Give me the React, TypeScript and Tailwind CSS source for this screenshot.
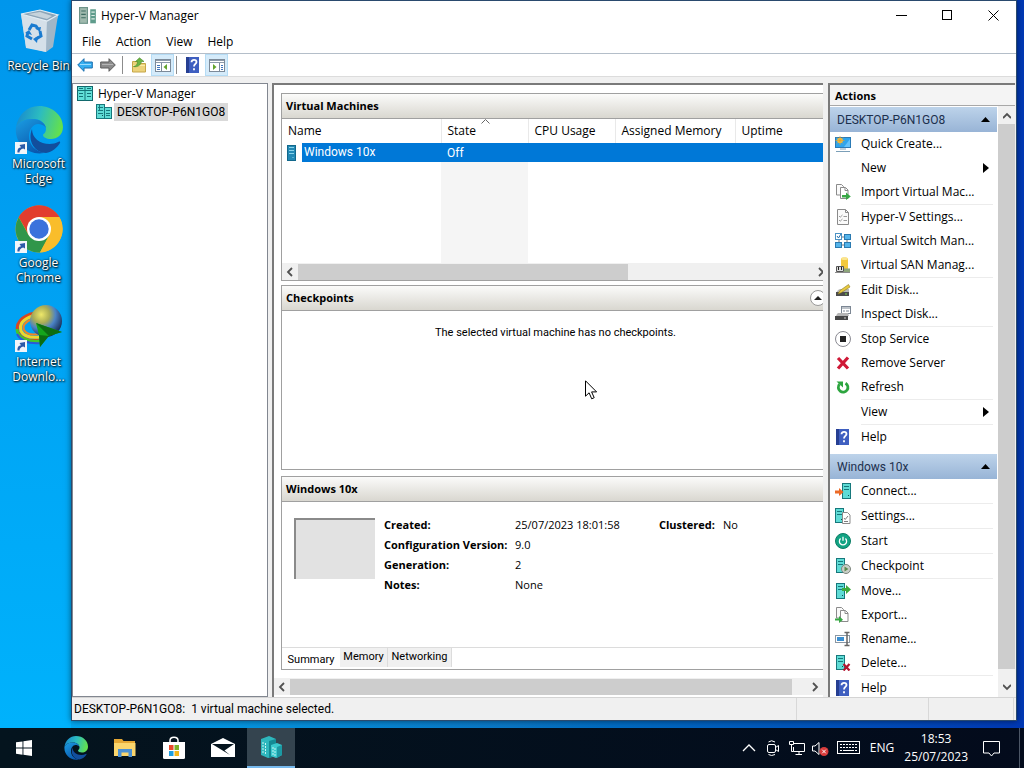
import type { ReactNode } from 'react'

/* ---------- icons ---------- */

const Svg = ({ children, size = 16, box = 16 }: { children: ReactNode; size?: number; box?: number }) => (
  <svg width={size} height={size} viewBox={`0 0 ${box} ${box}`} fill="none" className="shrink-0" aria-hidden="true">
    {children}
  </svg>
)

const Tower = ({ x = 0, y = 0, w = 8, h = 14 }: { x?: number; y?: number; w?: number; h?: number }) => (
  <g>
    <rect x={x + 0.5} y={y + 0.5} width={w - 1} height={h - 1} fill="#5fdcd6" stroke="#17787c" />
    <path d={`M${x + 2} ${y + 3.5}h${w - 4}M${x + 2} ${y + 6.5}h${w - 4}`} stroke="#17787c" />
    <path d={`M${x + w - 3} ${y + h - 3.5}h1`} stroke="#0b4f52" />
  </g>
)

const AppIcon = () => (
  <Svg size={18}>
    <rect x="0.500" y="0.500" width="7" height="14" fill="#9fb9ad" stroke="#6d9388" />
    <path d="M2 3.500h4M2 6.500h4M2 9.500h4" stroke="#3f6c62" />
    <rect x="10" y="2" width="5" height="12.500" fill="#5f9c8c" />
    <path d="M11 4.500h3M11 7.500h3M11 10.500h3" stroke="#dcebe4" />
  </Svg>
)

const TreeRootIcon = () => (
  <Svg>
    <rect x="0.5" y="0.5" width="15" height="14" fill="#62e0d8" stroke="#12686c" />
    <path d="M8 0v15M0 4.500h16M2 2.500h4M10 2.500h4M2 7.500h4M10 7.500h4M2 10.500h4M10 10.500h4" stroke="#147377" />
  </Svg>
)

const HostIcon = () => (
  <Svg>
    <Tower x={0} y={0} w={9} h={15} />
    <Tower x={8} y={3} w={8} h={12} />
    <path d="M2 9.500h5M10 11.500h4M3.500 1v5" stroke="#17787c" />
  </Svg>
)

const VmIcon = () => (
  <svg width="10" height="16" viewBox="0 0 10 16" fill="none" aria-hidden="true">
    <rect x="0.5" y="0.5" width="8" height="15" fill="#2389b5" stroke="#12688c" />
    <path d="M2 2.500h5M2 5.500h5M2 8.500h5" stroke="#8ad4ea" />
    <path d="M5.500 12.500h1" stroke="#8ad4ea" />
  </svg>
)

const HelpIcon = () => (
  <Svg>
    <rect x="1" y="0" width="13" height="16" fill="#3f5fc0" />
    <rect x="1" y="0" width="3" height="16" fill="#263f92" />
    <path d="M6.500 5.200c0-3.300 5-3 5-.3 0 2-2.500 2-2.500 4.600M9 11.300v2" stroke="#fff" strokeWidth="1.800" />
  </Svg>
)

const Arrow = ({ left = false }: { left?: boolean }) =>
  left ? (
    <Svg>
      <path d="M.7 8 7 1.700V5h8.300v6H7v3.300z" fill="#35aef0" stroke="#1c6fae" />
      <path d="M3 7.500h11" stroke="#9bdcff" />
    </Svg>
  ) : (
    <Svg>
      <path d="M15.300 8 9 1.700V5H.7v6H9v3.300z" fill="#8b8b8b" stroke="#5a5a5a" />
      <path d="M2 7.500h11" stroke="#b5b5b5" />
    </Svg>
  )

const FolderUpIcon = () => (
  <Svg>
    <path d="M1.500 4.500h5l1.500 2h6.500v8.500h-13z" fill="#ecd27a" stroke="#c6a648" />
    <path d="M2 8.500h12" stroke="#f9eba6" />
    <path d="M2.500 9.500c3-.5 4-2.500 4-5H4.500L8.500.8l4.500 3.700h-2.500C10 8 6.500 10.500 2.500 9.500z" fill="#6cb443" stroke="#4a8a2c" strokeWidth=".6" />
  </Svg>
)

const PaneIcon = ({ right = false }: { right?: boolean }) => (
  <Svg>
    <rect x="0.5" y="2.500" width="15" height="12" fill="#fff" stroke="#7c8a99" />
    <path d="M1 3.500h14M1 5.500h14" stroke="#8d9aaa" />
    {right ? (
      <>
        <path d="M10.500 6v8" stroke="#7c8a99" />
        <path d="M12 8.500h2M12 10.500h2M12 12.500h2" stroke="#3f74bd" />
        <path d="m4 7 3.500 3L4 13z" fill="#63a32c" />
      </>
    ) : (
      <>
        <path d="M6.500 6v8" stroke="#7c8a99" />
        <path d="M2 8.500h3M2 10.500h3M2 12.500h3" stroke="#3f74bd" />
        <path d="M12 7v6l-3.500-3z" fill="#63a32c" />
      </>
    )}
  </Svg>
)

const QuickCreateIcon = () => (
  <Svg>
    <rect x="0.500" y="1.500" width="15" height="10" fill="#2ea4ec" stroke="#2b7ab5" />
    <path d="M9 11 15 3v8z" fill="#63c2fa" />
    <circle cx="5" cy="4.500" r="2.800" fill="#f2c14b" />
    <path d="M5 0v9M.5 4.500h9M2 1.500l6 6M8 1.500l-6 6" stroke="#e2a52b" strokeWidth=".7" />
    <path d="M5 13h6M1 15.500h14" stroke="#7b9fb8" />
  </Svg>
)

const Pages = () => (
  <>
    <path d="M1.500.5h5l2 2V11h-7z" fill="#fafafa" stroke="#8b8b8b" />
    <path d="M5.500 3.500h5l2.500 2.500v8.500H5.500z" fill="#fff" stroke="#8b8b8b" />
    <path d="M10 3.500V6.500h3" stroke="#8b8b8b" />
  </>
)

const ImportIcon = () => (
  <Svg>
    <Pages />
    <path d="M7 11h4V8.500l4.800 4-4.800 3.500v-2.500H7z" fill="#38a845" />
  </Svg>
)

const ExportIcon = () => (
  <Svg>
    <Pages />
    <path d="M0 11.500h4V9l4 3.700L4 16v-2.500H0z" fill="#38a845" />
  </Svg>
)

const HostSettingsIcon = () => (
  <Svg>
    <path d="M2.500.5h8l3 3v12h-11z" fill="#fafafa" stroke="#8a8a8a" />
    <path d="M10.500.5v3h3" stroke="#8a8a8a" />
    <path d="m4 7 1.200 1.200L7.500 6M4 11l1.200 1.200L7.500 10M8.500 7.500H12M8.500 11.500H12" stroke="#999" />
  </Svg>
)

const SwitchIcon = () => (
  <Svg>
    <path d="M7 4h3M7 12h3M4 7v3M12 7v3" stroke="#777" />
    <rect x="0.500" y="0.500" width="6" height="6" fill="#fff" stroke="#4c93c4" />
    <path d="m2 3 1.500 2L6 1" stroke="#1f6fad" />
    <rect x="9.500" y="1.500" width="6" height="5" fill="#55b4ea" stroke="#2b7ab0" />
    <rect x="0.500" y="9.500" width="6" height="5" fill="#55b4ea" stroke="#2b7ab0" />
    <rect x="9.500" y="9.500" width="6" height="5" fill="#55b4ea" stroke="#2b7ab0" />
  </Svg>
)

const SanIcon = () => (
  <Svg>
    <path d="M6 1.500C6 0 13 0 13 1.500V12H6z" fill="#f3c93c" />
    <ellipse cx="9.500" cy="1.800" rx="3.500" ry="1.200" fill="#fbe58e" />
    <path d="M1.500 14.500V9.500h7v5z" fill="#ddd" stroke="#555" />
    <path d="M3.500 10v3M6.500 10v3" stroke="#222" />
    <path d="M9 11.500h6v4H9z" fill="#8da57b" />
    <path d="M0 15.500h15" stroke="#8c8c8c" />
  </Svg>
)

const EditDiskIcon = () => (
  <Svg>
    <path d="m3 8 2-1h9v4H1z" fill="#b9b9b9" />
    <path d="M1 10h13v4H1z" fill="#4c4c4c" />
    <path d="M10 12h2" stroke="#7fdd4b" />
    <path d="m3 12 2-3.500 8.500-6L15 5l-8.500 5.500z" fill="#e8c93f" stroke="#8c7a22" strokeWidth=".6" />
  </Svg>
)

const InspectDiskIcon = () => (
  <Svg>
    <rect x="6.500" y="0.500" width="9" height="7" fill="#fff" stroke="#7c8794" />
    <path d="M6 2h10M8 5h2M11 5h3" stroke="#7c8794" />
    <path d="m2 8 1-1h10l1 3H1z" fill="#b5b5b5" />
    <path d="M0 10h13v4H0z" fill="#474747" />
    <path d="M9 12h2" stroke="#ccc" />
  </Svg>
)

const StopIcon = () => (
  <Svg>
    <circle cx="8" cy="8" r="7.500" fill="#fff" stroke="#8b8b93" />
    <rect x="5" y="5" width="6" height="6" fill="#222" />
  </Svg>
)

const RemoveIcon = () => (
  <Svg>
    <path d="m3 3 10 10.500M13 2.500l-10 11" stroke="#cf1937" strokeWidth="3.200" />
  </Svg>
)

const RefreshIcon = () => (
  <Svg>
    <path d="M10.500 4.200a4.800 4.800 0 1 1-6 1" stroke="#2da53f" strokeWidth="2.800" />
    <path d="M1.500 2.500H8v6z" fill="#2da53f" />
  </Svg>
)

const ConnectIcon = () => (
  <Svg>
    <Tower x={7} y={0} w={9} h={16} />
    <path d="M0 7.500h4V5l4.500 4L4 13v-2.500H0z" fill="#ec6a26" />
  </Svg>
)

const SettingsIcon = () => (
  <Svg>
    <Tower x={0} y={0} w={9} h={15} />
    <path d="M7.500 4.500h5l2.500 2.500v8.500H7.500z" fill="#fff" stroke="#8a8a8a" />
    <path d="m9 10 1.200 1.500L13 8M9 13.500h4" stroke="#7d7d7d" />
  </Svg>
)

const StartVmIcon = () => (
  <Svg>
    <circle cx="8" cy="8" r="7.500" fill="#12a383" stroke="#0b7d65" />
    <path d="M5.600 5.600a3.600 3.600 0 1 0 4.800 0M8 3.800v4" stroke="#fff" strokeWidth="1.300" />
  </Svg>
)

const CheckpointIcon = () => (
  <Svg>
    <Tower x={1} y={0} w={9} h={15} />
    <circle cx="11" cy="11" r="4.500" fill="#c9cfc8" stroke="#7e867d" />
    <path d="M9.500 8.500v5l4-2.500z" fill="#5d8a4f" />
  </Svg>
)

const MoveIcon = () => (
  <Svg>
    <Tower x={1} y={0} w={9} h={16} />
    <path d="M7 5h4V2l5 4.500-5 4.500V8H7z" fill="#3daa3d" />
  </Svg>
)

const RenameIcon = () => (
  <Svg>
    <rect x="0.500" y="4.500" width="14" height="7" fill="#fff" stroke="#8b97a3" />
    <rect x="2" y="6" width="7" height="4" fill="#3a8fd2" />
    <path d="M9.500 1.500h5M9.500 14.500h5M12 1.500v13" stroke="#666" strokeWidth="1.500" />
  </Svg>
)

const DeleteIcon = () => (
  <Svg>
    <Tower x={1} y={0} w={9} h={15} />
    <path d="m8.500 9 6 6.500M14.500 9l-6 6.500" stroke="#b3142f" strokeWidth="2.200" />
  </Svg>
)

const EdgeLogo = ({ size, id }: { size: number; id: string }) => (
  <Svg size={size} box={48}>
    <defs>
      <linearGradient id={`${id}a`} x1="0" y1="0.200" x2="1" y2="0.400">
        <stop offset="0" stopColor="#1787cf" />
        <stop offset="0.500" stopColor="#2cbcc0" />
        <stop offset="1" stopColor="#63e04e" />
      </linearGradient>
      <linearGradient id={`${id}b`} x1="0" y1="0" x2="0.600" y2="1">
        <stop offset="0" stopColor="#1b9de2" />
        <stop offset="1" stopColor="#0a58ae" />
      </linearGradient>
    </defs>
    <path d="M1 21C3 9 12 0 24 0c14 0 24 10 24 21 0 8-6 12-12 12-5 0-8-2-8-4 0-1 3-2 3-6 0-5-5-10-13-10C10 13 4 16 1 21z" fill={`url(#${id}a)`} />
    <path d="M1 21c3-5 9-8 16-8 8 0 13 4 14 9-2-3-5-4-8-4-5 0-9 6-9 12 0 9 6 15 15 17C13 50-1 37 1 21z" fill={`url(#${id}b)`} />
    <path d="M17 23c-5 12 3 24 14 24 6-1 11-5 14-10 .6-1.200-.4-1.800-1.400-1.200-3 1.600-6 2.200-9 2.200C25 38 17 32 17 23z" fill="#124e9c" />
  </Svg>
)

const ShortcutBadge = () => (
  <span className="absolute bottom-0 left-0 flex h-3 w-3 items-center justify-center bg-[#f1f5fa]">
    <svg width="10" height="10" viewBox="0 0 10 10" fill="none">
      <path d="M1.500 9.500C1.200 6 3 4.500 5 4.300L3.500 2 9 1v5.500L7.200 5.500C5 6 3.500 7.500 3.500 9.500z" fill="#2c5aa8" />
    </svg>
  </span>
)

const RecycleBin = () => (
  <Svg size={48} box={48}>
    <path d="M6 6 11 39 31 44 43 8z" fill="#b9cfdf" />
    <path d="m6 6 5 34 20 4 1-31z" fill="#d5e0e9" />
    <path d="m32 13 11-6-5 32-7 5z" fill="#a1b6c7" />
    <path d="m6 6 19-4 18 5-11 6z" fill="#8da5b8" stroke="#e3edf4" strokeWidth="1.200" />
    <path d="m13 6 12-2 12 4-5 3z" fill="#c6d3dc" />
    <path d="m14 22 3-5 4 1 2 3M25 23l1 5-5 3M17 31l-5-3 1-4" stroke="#1a7bd0" strokeWidth="3" />
    <path d="m20 20 6-1-1 5zM23 28l-5 3 4 4zM10 25l4-3 3 5z" fill="#1a7bd0" />
  </Svg>
)

const ChromeLogo = () => (
  <Svg size={48} box={48}>
    <circle cx="24" cy="24" r="23.500" fill="#f9bd2b" />
    <path d="M24 24H44.500L44.400 12A23.500 23.500 0 0 0 3.700 12.200L14 30z" fill="#e23d2e" />
    <path d="M3.700 12.200A23.500 23.500 0 0 0 25 47.500L34.400 30 24 24l-10.400 6z" fill="#30964a" />
    <path d="M24 12h20.400A23.500 23.500 0 0 1 25 47.500L34.400 30z" fill="#f9bd2b" />
    <circle cx="24" cy="24" r="12" fill="#fff" />
    <circle cx="24" cy="24" r="9.700" fill="#3b72dc" />
  </Svg>
)

const IdmLogo = () => (
  <Svg size={48} box={48}>
    <defs>
      <radialGradient id="globe" cx="0.350" cy="0.300" r="0.750">
        <stop offset="0" stopColor="#eee86a" />
        <stop offset="0.350" stopColor="#a9ac55" />
        <stop offset="0.600" stopColor="#4b83c6" />
        <stop offset="1" stopColor="#15284f" />
      </radialGradient>
    </defs>
    <path d="M20 9C6 12 0 20 3 28c3 7 12 9 21 8" stroke="#d9461f" strokeWidth="3" />
    <path d="M18 12C8 15 4 20 6 27c3 6 10 7 19 6" stroke="#f0d62b" strokeWidth="3" />
    <path d="M17 15c-7 3-10 7-8 11 3 5 9 5 15 4" stroke="#ef8426" strokeWidth="2" />
    <path d="M2 25c0 8 10 14 24 12" stroke="#44c62c" strokeWidth="3" />
    <path d="M2 30c4 8 13 10 25 9" stroke="#2b59d8" strokeWidth="2" />
    <circle cx="31" cy="17" r="16" fill="url(#globe)" />
    <path d="m21 19 26 9-14 4-8 11-1-12z" fill="#14a51c" />
    <path d="m21 19 13 13 13-4zM24 31l10 1-9 11z" fill="#0c6d12" />
  </Svg>
)

/* ---------- data ---------- */

type Action = { label: string; icon?: ReactNode; submenu?: boolean; line?: boolean }

const hostActions: Action[] = [
  { label: 'Quick Create...', icon: <QuickCreateIcon /> },
  { label: 'New', submenu: true },
  { label: 'Import Virtual Mac...', icon: <ImportIcon />, line: true },
  { label: 'Hyper-V Settings...', icon: <HostSettingsIcon /> },
  { label: 'Virtual Switch Man...', icon: <SwitchIcon /> },
  { label: 'Virtual SAN Manag...', icon: <SanIcon />, line: true },
  { label: 'Edit Disk...', icon: <EditDiskIcon /> },
  { label: 'Inspect Disk...', icon: <InspectDiskIcon />, line: true },
  { label: 'Stop Service', icon: <StopIcon /> },
  { label: 'Remove Server', icon: <RemoveIcon /> },
  { label: 'Refresh', icon: <RefreshIcon />, line: true },
  { label: 'View', submenu: true, line: true },
  { label: 'Help', icon: <HelpIcon /> },
]

const vmActions: Action[] = [
  { label: 'Connect...', icon: <ConnectIcon />, line: true },
  { label: 'Settings...', icon: <SettingsIcon />, line: true },
  { label: 'Start', icon: <StartVmIcon />, line: true },
  { label: 'Checkpoint', icon: <CheckpointIcon />, line: true },
  { label: 'Move...', icon: <MoveIcon /> },
  { label: 'Export...', icon: <ExportIcon /> },
  { label: 'Rename...', icon: <RenameIcon /> },
  { label: 'Delete...', icon: <DeleteIcon />, line: true },
  { label: 'Help', icon: <HelpIcon /> },
]

const shortcuts = [
  { label: 'Recycle Bin', icon: <RecycleBin />, linked: false },
  { label: 'Microsoft Edge', icon: <EdgeLogo size={48} id="desk" />, linked: true },
  { label: 'Google Chrome', icon: <ChromeLogo />, linked: true },
  { label: 'Internet Downlo...', icon: <IdmLogo />, linked: true },
]

/* ---------- desktop ---------- */

function DesktopIcons() {
  return (
    <div className="flex w-[71px] shrink-0 flex-col items-end overflow-hidden bg-linear-to-b from-[#0096ec] to-[#00b2fc] pt-2">
      {shortcuts.map((item) => (
        <button
          key={item.label}
          className="flex w-[65px] flex-col items-center pb-[19px] text-center text-xs leading-[15px] text-white [text-shadow:1px_1px_2px_#000,0_0_2px_#000] first:pb-[33px]"
        >
          <span className="relative mb-[2px] block h-12 w-12">
            {item.icon}
            {item.linked && <ShortcutBadge />}
          </span>
          {item.linked ? (
            <span className="w-[60px]">{item.label}</span>
          ) : (
            <span className="whitespace-nowrap">{item.label}</span>
          )}
        </button>
      ))}
    </div>
  )
}

/* ---------- window parts ---------- */

function TitleBar() {
  return (
    <header className="flex h-[29px] shrink-0 items-center pl-[7px]">
      <AppIcon />
      <h1 className="ml-1 flex-1 text-xs">Hyper-V Manager</h1>
      <button aria-label="Minimize" className="flex h-full w-[46px] items-center justify-center">
        <svg width="11" height="11" viewBox="0 0 11 11"><path d="M0 5.500h11" stroke="#000" /></svg>
      </button>
      <button aria-label="Maximize" className="flex h-full w-[46px] items-center justify-center">
        <svg width="11" height="11" viewBox="0 0 11 11"><rect x="0.500" y="0.500" width="9" height="9" fill="none" stroke="#000" /></svg>
      </button>
      <button aria-label="Close" className="flex h-full w-[46px] items-center justify-center">
        <svg width="11" height="11" viewBox="0 0 11 11"><path d="m.5.5 10 10m0-10-10 10" stroke="#000" /></svg>
      </button>
    </header>
  )
}

function Toolbar() {
  return (
    <div className="flex h-[23px] shrink-0 items-center border-b border-[#dcdcdc] pl-[5px]">
      <button aria-label="Back"><Arrow left /></button>
      <button aria-label="Forward" className="ml-[7px]"><Arrow /></button>
      <span className="ml-[6px] h-[18px] w-px bg-[#8c8c8c]" />
      <button aria-label="Up one level" className="ml-2"><FolderUpIcon /></button>
      <button aria-label="Console tree" className="ml-1 flex h-[22px] w-[23px] items-center justify-center border border-[#b5dcf5] bg-[#d5ebfa]">
        <PaneIcon />
      </button>
      <span className="ml-[2px] h-[18px] w-px bg-[#8c8c8c]" />
      <button aria-label="Help" className="ml-2"><HelpIcon /></button>
      <button aria-label="Action pane" className="ml-1 flex h-[22px] w-[23px] items-center justify-center border border-[#b5dcf5] bg-[#d5ebfa]">
        <PaneIcon right />
      </button>
    </div>
  )
}

const chevronPaths = {
  left: 'M6 1 2 5l4 4',
  right: 'm2 1 4 4-4 4',
  up: 'm0 7 4-4 4 4',
  down: 'm0 3 4 4 4-4',
}

function ScrollButton({ dir }: { dir: keyof typeof chevronPaths }) {
  return (
    <button aria-label={`Scroll ${dir}`} className="flex h-4 w-4 shrink-0 items-center justify-center">
      <svg width="8" height="10" viewBox="0 0 8 10" fill="none">
        <path d={chevronPaths[dir]} stroke="#505050" strokeWidth="1.800" />
      </svg>
    </button>
  )
}

function GroupHeader({ title, children }: { title: string; children?: ReactNode }) {
  return (
    <div className="flex h-[25px] shrink-0 items-center justify-between border-b border-[#a0a0a0] bg-linear-to-b from-[#fbfbfa] to-[#d9d7d0] pl-1">
      <h2 className="text-[11px] font-bold">{title}</h2>
      {children}
    </div>
  )
}

function VirtualMachines() {
  return (
    <section className="flex h-[188px] shrink-0 flex-col overflow-hidden border-y border-l border-[#a0a0a0]">
      <GroupHeader title="Virtual Machines" />
      <table className="w-full flex-1 table-fixed border-collapse text-left">
        <thead>
          <tr className="h-6 text-xs">
            <th className="w-[159px] border-r border-[#e9e9e9] pl-[6px] font-normal">Name</th>
            <th className="relative w-[87px] border-r border-[#e9e9e9] pl-[6px] font-normal" aria-sort="ascending">
              State
              <svg className="absolute top-0 left-[39px]" width="9" height="5" viewBox="0 0 9 5" fill="none">
                <path d="M.5 4.500l4-4 4 4" stroke="#666" />
              </svg>
            </th>
            <th className="w-[87px] border-r border-[#e9e9e9] pl-[6px] font-normal">CPU Usage</th>
            <th className="w-[120px] border-r border-[#e9e9e9] pl-[6px] font-normal">Assigned Memory</th>
            <th className="pl-[6px] font-normal">Uptime</th>
          </tr>
        </thead>
        <tbody className="font-['Roboto',sans-serif] text-xs text-white">
          <tr className="h-[19px]">
            <td className="p-0">
              <div className="flex items-center gap-[5px] pl-[5px]">
                <VmIcon />
                <span className="h-[19px] flex-1 bg-[#0078d7] pl-[2px] leading-[19px]">Windows 10x</span>
              </div>
            </td>
            <td className="bg-[#0078d7] p-0 pl-[6px]">Off</td>
            <td className="bg-[#0078d7]" />
            <td className="bg-[#0078d7]" />
            <td className="bg-[#0078d7]" />
          </tr>
          <tr>
            <td />
            <td className="bg-[#f5f5f5]" />
            <td colSpan={3} />
          </tr>
        </tbody>
      </table>
      <div className="-mr-[6px] flex h-[17px] shrink-0 items-center bg-[#f0f0f0]">
        <ScrollButton dir="left" />
        <div className="flex h-4 flex-1">
          <div className="h-full w-[64%] bg-[#cdcdcd]" />
        </div>
        <ScrollButton dir="right" />
      </div>
    </section>
  )
}

function Checkpoints() {
  return (
    <section className="mt-1 flex min-h-[80px] flex-1 flex-col overflow-hidden border-y border-l border-[#a0a0a0]">
      <GroupHeader title="Checkpoints">
        <button aria-label="Collapse" className="-mr-[3px] flex h-4 w-4 items-center justify-center rounded-full border border-[#999] bg-white">
          <svg width="8" height="4" viewBox="0 0 8 4"><path d="M0 4l4-4 4 4z" fill="#222" /></svg>
        </button>
      </GroupHeader>
      <p className="pt-[14px] pl-[6px] text-center font-['Roboto',sans-serif] text-[11px] leading-4">
        The selected virtual machine has no checkpoints.
      </p>
    </section>
  )
}

function Details() {
  return (
    <section className="mt-[6px] flex h-[194px] shrink-0 flex-col border-y border-l border-[#a0a0a0]">
      <GroupHeader title="Windows 10x" />
      <div className="flex flex-1 pt-[13px] pl-3 text-[11px] leading-5">
        <div className="mt-[3px] h-[61px] w-[81px] border-t-2 border-l-2 border-[#8a8a8a] bg-[#e2e2e2]" />
        <dl className="ml-[9px] grid auto-rows-[20px] grid-cols-[131px_144px_64px_auto] content-start whitespace-nowrap">
          <dt className="font-bold">Created:</dt>
          <dd>25/07/2023 18:01:58</dd>
          <dt className="font-bold">Clustered:</dt>
          <dd>No</dd>
          <dt className="font-bold">Configuration Version:</dt>
          <dd className="col-span-3">9.0</dd>
          <dt className="font-bold">Generation:</dt>
          <dd className="col-span-3">2</dd>
          <dt className="font-bold">Notes:</dt>
          <dd className="col-span-3">None</dd>
        </dl>
      </div>
      <div role="tablist" className="flex h-[22px] shrink-0 items-start border-t border-[#dcdcdc] font-['Roboto',sans-serif] text-[11px]">
        <button role="tab" aria-selected="true" className="h-[22px] w-[58px] pt-[3px]">Summary</button>
        <button role="tab" aria-selected="false" className="h-[19px] w-12 border-r border-[#dcdcdc] bg-[#f0f0f0]">Memory</button>
        <button role="tab" aria-selected="false" className="h-[19px] w-16 border-r border-[#dcdcdc] bg-[#f0f0f0]">Networking</button>
      </div>
    </section>
  )
}

function ActionGroup({ title, actions }: { title: string; actions: Action[] }) {
  return (
    <section className="pb-[5px]">
      <h3>
        <button className="flex h-[25px] w-full items-center justify-between bg-linear-to-b from-[#bdd3ea] to-[#98b4d6] px-[7px] font-['Roboto',sans-serif] text-xs text-[#1c2f4d]">
          {title}
          <svg width="9" height="5" viewBox="0 0 9 5"><path d="M0 5l4.500-5L9 5z" fill="#000" /></svg>
        </button>
      </h3>
      <ul>
        {actions.map((action) => (
          <li key={action.label}>
            <button className="flex h-6 w-full items-center pr-2 pl-[5px] text-left text-xs">
              <span className="mr-[10px] h-4 w-4 shrink-0">{action.icon}</span>
              <span className="flex-1 whitespace-nowrap">{action.label}</span>
              {action.submenu && (
                <svg width="6" height="10" viewBox="0 0 6 10"><path d="M0 0l6 5-6 5z" fill="#000" /></svg>
              )}
            </button>
            {action.line && <div className="mr-1 ml-[31px] h-px bg-[#ececec]" />}
          </li>
        ))}
      </ul>
    </section>
  )
}

function ActionsPane() {
  return (
    <aside className="ml-[5px] flex w-[187px] shrink-0 flex-col overflow-hidden border-t-2 border-l-2 border-[#7a7a7a] bg-white">
      <h2 className="h-[21px] shrink-0 border-b border-[#a8a8a8] bg-[#f4f4f4] pl-[5px] text-[11px] leading-[21px] font-bold">Actions</h2>
      <div className="flex min-h-0 flex-1">
        <div className="min-w-0 flex-1 overflow-hidden pt-px">
          <ActionGroup title="DESKTOP-P6N1GO8" actions={hostActions} />
          <ActionGroup title="Windows 10x" actions={vmActions} />
        </div>
        <div className="ml-px flex w-[17px] shrink-0 flex-col items-center bg-[#f0f0f0] py-[2px]">
          <ScrollButton dir="up" />
          <div className="mb-[10px] w-full flex-1 bg-[#cdcdcd]" />
          <ScrollButton dir="down" />
        </div>
      </div>
    </aside>
  )
}

function ManagerWindow() {
  return (
    <main className="relative mr-[7px] mb-[7px] flex min-w-0 flex-1 flex-col border border-[#2a4a6e] bg-white shadow-[0_0_6px_rgba(0,0,0,0.5)]">
      <TitleBar />
      <nav className="flex h-6 shrink-0 items-center gap-[15px] border-b border-[#b4bec9] pl-[10px] text-xs">
        {['File', 'Action', 'View', 'Help'].map((item) => (
          <button key={item}>{item}</button>
        ))}
      </nav>
      <Toolbar />
      <div className="flex min-h-0 flex-1 bg-[#f0f0f0] pt-[6px] pr-px">
        <nav className="w-[196px] shrink-0 border border-[#828790] bg-white pt-px pl-1 text-xs">
          <button className="flex h-[18px] items-center gap-[5px]">
            <TreeRootIcon />
            Hyper-V Manager
          </button>
          <button className="ml-[19px] flex h-[18px] items-center gap-[2px]">
            <HostIcon />
            <span className="h-[18px] bg-[#d9d9d9] px-[3px] font-['Roboto',sans-serif] leading-[18px]">DESKTOP-P6N1GO8</span>
          </button>
        </nav>

        <div className="ml-1 flex min-w-0 flex-1 flex-col border-t-2 border-l-2 border-[#7a7a7a] bg-white">
          <div className="flex min-h-0 flex-1 flex-col pt-2 pl-[7px]">
            <VirtualMachines />
            <Checkpoints />
            <Details />
          </div>
          <div className="mt-2 mb-[2px] flex h-[17px] shrink-0 items-center bg-[#f0f0f0]">
            <ScrollButton dir="left" />
            <div className="mr-[15px] h-4 flex-1 bg-[#cdcdcd]" />
            <ScrollButton dir="right" />
          </div>
        </div>

        <ActionsPane />
      </div>

      <footer className="flex h-[23px] shrink-0 items-center border-t border-[#d4d4d4] bg-[#f0f0f0] pl-[2px] text-xs">
        <span className="flex-1 font-['Roboto',sans-serif] whitespace-pre">DESKTOP-P6N1GO8:  1 virtual machine selected.</span>
        <span className="h-full w-[132px] border-l border-[#d8d8d8]" />
        <span className="mr-[2px] h-full w-[86px] border-x border-[#d8d8d8]" />
      </footer>

      {/* mouse pointer */}
      <svg className="pointer-events-none absolute top-[379px] left-[513px]" width="13" height="20" viewBox="0 0 13 20">
        <path d="M.5.800v15.400l3.600-3.400 2.600 6 2.500-1.100-2.600-5.800h5z" fill="#fff" stroke="#000" />
      </svg>
    </main>
  )
}

/* ---------- taskbar ---------- */

function Taskbar() {
  return (
    <footer className="flex h-10 shrink-0 items-center bg-linear-to-r from-[#04141e] to-[#030b1c] text-xs text-white">
      <button aria-label="Start" className="mr-[3px] flex h-full w-12 items-center justify-center">
        <Svg>
          <path d="M0 2.300 6.500 1.400V7.600H0zM7.400 1.300 16 0v7.600H7.400zM0 8.500h6.500v6.200L0 13.800zM7.400 8.500H16V16l-8.600-1.200z" fill="#fff" />
        </Svg>
      </button>
      <button aria-label="Microsoft Edge" className="flex h-full w-[49px] items-center justify-center">
        <EdgeLogo size={24} id="bar" />
      </button>
      <button aria-label="File Explorer" className="flex h-full w-[49px] items-center justify-center">
        <Svg size={22} box={22}>
          <path d="M0 2h8l1.500 2H21v15H0z" fill="#e5a834" />
          <path d="M0 6h21.500v13H0z" fill="#fbd66c" />
          <path d="M4 12h14v8h-3.500v-4.500h-7V20H4z" fill="#4c91d3" />
        </Svg>
      </button>
      <button aria-label="Microsoft Store" className="flex h-full w-[49px] items-center justify-center">
        <Svg size={24} box={24}>
          <path d="M8 6V4.500C8 0 16 0 16 4.500V6" stroke="#fff" strokeWidth="1.500" />
          <path d="M1 6h22v15.500a1.500 1.500 0 0 1-1.500 1.500h-19A1.500 1.500 0 0 1 1 21.500z" fill="#fff" />
          <path d="M7 9h4.500v5H7z" fill="#e8492b" />
          <path d="M12.500 9H17v5h-4.500z" fill="#7cb228" />
          <path d="M7 15h4.500v5H7z" fill="#209fe0" />
          <path d="M12.500 15H17v5h-4.500z" fill="#f4b61c" />
        </Svg>
      </button>
      <button aria-label="Mail" className="flex h-full w-[49px] items-center justify-center">
        <Svg size={24} box={24}>
          <path d="M0 8 12 2l12 6v13H0z" fill="#fff" />
          <path d="M1 8h22l-9.500 6.500L19 19 1 8z" fill="#04141e" />
        </Svg>
      </button>
      <button aria-label="Hyper-V Manager" className="flex h-full w-12 items-center justify-center border-b-2 border-[#76b9ed] bg-[#34444f]">
        <Svg size={24} box={24}>
          <path d="m2 4 8-3 7 3v17l-8 2-7-3z" fill="#2eb7bd" />
          <path d="m10 6 7-2v17l-7 2z" fill="#138a94" />
          <path d="m12 10 6-2 5 2v10l-6 3-5-2z" fill="#3bc9cd" />
          <path d="m18 12 5-2v10l-5 3z" fill="#1b9aa4" />
          <path d="M4 7v12M6.500 8v12M14 12v8M16 13v8" stroke="#c4f4f2" strokeDasharray="2 1" />
        </Svg>
      </button>

      <div className="ml-auto flex h-full items-center">
        <button aria-label="Show hidden icons" className="mr-[9px]">
          <svg width="14" height="16" viewBox="0 0 14 16" fill="none"><path d="m1 11 6-6 6 6" stroke="#fff" strokeWidth="1.300" /></svg>
        </button>
        <button aria-label="Meet now" className="mr-2">
          <Svg>
            <rect x="2.500" y="4.500" width="8" height="8" rx="1.500" stroke="#fff" />
            <path d="m10.500 7.500 3-2v6l-3-2M3.500 2Q6.500-.5 10 2M3.500 14.500q3 2 6.500 0" stroke="#fff" />
          </Svg>
        </button>
        <button aria-label="Network" className="mr-[7px]">
          <Svg>
            <path d="M5 3.500h10.500v8H4.500V7M10 11.500v3M6.500 14.500H13" stroke="#fff" />
            <path d="M.5 1.500h4v3h-4zM2.500 4.500v7h2" stroke="#fff" />
          </Svg>
        </button>
        <button aria-label="Volume muted" className="mr-2">
          <Svg size={17} box={17}>
            <path d="M.5 6h2.500L7 2.500v12L3 11H.500z" stroke="#fff" />
            <circle cx="12" cy="11.500" r="4.500" fill="#d83b3b" />
            <path d="m10.200 9.700 3.600 3.600m0-3.600-3.600 3.600" stroke="#fff" />
          </Svg>
        </button>
        <button aria-label="Touch keyboard" className="mr-[10px]">
          <svg width="23" height="14" viewBox="0 0 23 14" fill="none">
            <rect x="0.500" y="0.500" width="22" height="12" stroke="#fff" />
            <path d="M3 3.500h17M3 6.500h17" stroke="#fff" strokeDasharray="2 1" />
            <path d="M3 9.500h2M6 9.500h11M18 9.500h2" stroke="#fff" />
          </svg>
        </button>
        <button className="mr-[10px]">ENG</button>
        <button className="mr-[15px] text-center leading-[18px]">
          <time className="block">18:53</time>
          <span className="block">25/07/2023</span>
        </button>
        <button aria-label="Notifications" className="mr-[19px]">
          <Svg size={17} box={17}>
            <path d="M.5 1.500h16v11.500H11l-2.500 3L6 13H.500z" stroke="#fff" />
          </Svg>
        </button>
        <span className="mr-1 h-full w-px bg-[#4c5666]" />
      </div>
    </footer>
  )
}

export default function App() {
  return (
    <div className="flex h-screen flex-col overflow-hidden bg-linear-to-r from-[#00aef8] via-[#0a76c4] to-[#0038b4] font-['Open_Sans','Noto_Sans',sans-serif] text-black">
      <div className="flex min-h-0 flex-1">
        <DesktopIcons />
        <ManagerWindow />
      </div>
      <Taskbar />
    </div>
  )
}
